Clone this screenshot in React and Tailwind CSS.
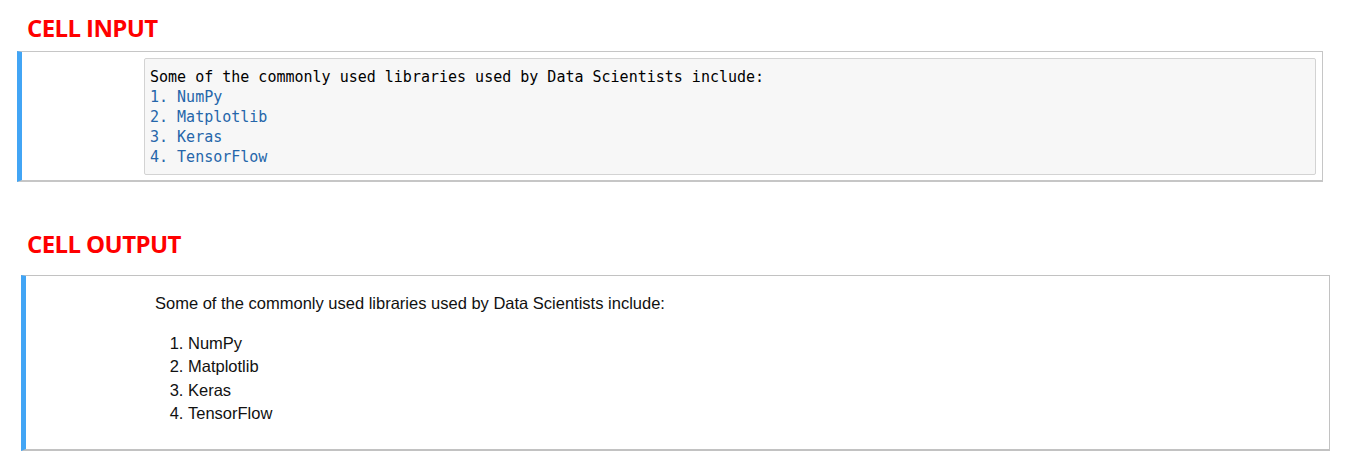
export default function App() {
  const mono = { fontFamily: '"DejaVu Sans Mono", "Liberation Mono", monospace' };
  return (
    <div className="w-[1345px] h-[470px] bg-white overflow-hidden">
      <div
        className="ml-[27px] pt-[12px] text-[24px] leading-[32px] font-bold text-[#ff0000] tracking-[-0.6px]"
        style={{ fontFamily: '"Open Sans", sans-serif' }}
      >
        CELL INPUT
      </div>
      <div className="ml-[17px] mt-[7px] w-[1306px] h-[131px] border border-[#c6c6c6] border-b-2 border-l-[5px] border-l-[#42a5f5] pt-[6px] pr-[6px] pl-[122px]">
        <div
          className="h-[117px] bg-[#f7f7f7] border border-[#d3d3d3] rounded-[2px] pl-[5px] pt-[8px] text-[15px] leading-[20px] text-[#000]"
          style={mono}
        >
          <div>Some of the commonly used libraries used by Data Scientists include:</div>
          <div className="text-[#2566aa]">1. NumPy</div>
          <div className="text-[#2566aa]">2. Matplotlib</div>
          <div className="text-[#2566aa]">3. Keras</div>
          <div className="text-[#2566aa]">4. TensorFlow</div>
        </div>
      </div>
      <div
        className="ml-[27px] mt-[46px] text-[24px] leading-[32px] font-bold text-[#ff0000] tracking-[-0.6px]"
        style={{ fontFamily: '"Open Sans", sans-serif' }}
      >
        CELL OUTPUT
      </div>
      <div
        className="ml-[21px] mt-[15px] w-[1309px] h-[176px] border border-[#c2c2c2] border-b-2 border-l-[5px] border-l-[#42a5f5] pl-[129px] pt-[16px] text-[16.5px] leading-[23.5px] text-[#111]"
        style={{ fontFamily: '"Liberation Sans", Arial, sans-serif' }}
      >
        <p>Some of the commonly used libraries used by Data Scientists include:</p>
        <ol className="list-decimal pl-[33px] mt-[16px]">
          <li>NumPy</li>
          <li>Matplotlib</li>
          <li>Keras</li>
          <li>TensorFlow</li>
        </ol>
      </div>
    </div>
  );
}
